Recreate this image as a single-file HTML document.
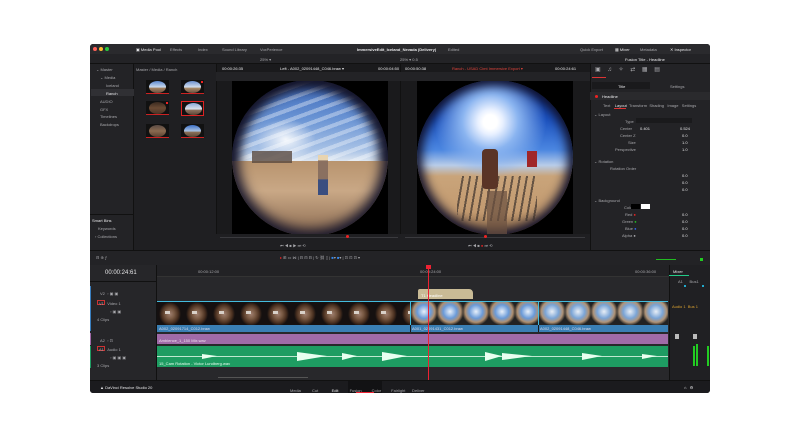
<!DOCTYPE html>
<html><head><meta charset="utf-8"><style>
*{margin:0;padding:0;box-sizing:border-box}
body{width:800px;height:438px;background:#fff;position:relative;overflow:hidden;font-family:"Liberation Sans",sans-serif;color:#b8b8bc;font-size:4px}
.a{position:absolute}
.t{position:absolute;white-space:nowrap;font-size:4px;color:#a8a8ac}
.w{color:#e6e6e8}
.th{position:absolute;width:23px;height:14px;border-bottom:1px solid #c22;background:#111;overflow:hidden}
.th i{position:absolute;left:3px;top:1px;width:17px;height:12px;border-radius:50%}
</style></head><body>
<div class="a" style="left:90px;top:44px;width:620px;height:349px;background:#1c1c1f;border-radius:3px;overflow:hidden">
 <div class="a" style="left:0;top:0;width:620px;height:10px;background:#2a2a2d"></div>
 <div class="a" style="left:3px;top:3px;width:4px;height:4px;border-radius:50%;background:#ff5f57"></div>
 <div class="a" style="left:9px;top:3px;width:4px;height:4px;border-radius:50%;background:#febc2e"></div>
 <div class="a" style="left:15px;top:3px;width:4px;height:4px;border-radius:50%;background:#28c840"></div>
 <span class="t w" style="left:46px;top:3px">▣ Media Pool</span>
 <span class="t" style="left:80px;top:3px">Effects</span>
 <span class="t" style="left:108px;top:3px">Index</span>
 <span class="t" style="left:132px;top:3px">Sound Library</span>
 <span class="t" style="left:170px;top:3px">VoxPerience</span>
 <span class="t w" style="left:267px;top:3px;font-weight:bold">ImmersiveEdit_Iceland_Nevada (Delivery)</span>
 <span class="t" style="left:358px;top:3px">Edited</span>
 <span class="t" style="left:490px;top:3px">Quick Export</span>
 <span class="t w" style="left:525px;top:3px">▦ Mixer</span>
 <span class="t" style="left:550px;top:3px">Metadata</span>
 <span class="t w" style="left:580px;top:3px">✕ Inspector</span>
 <div class="a" style="left:0;top:10px;width:620px;height:10px;background:#232326;border-bottom:1px solid #111"></div>
 <span class="t" style="left:170px;top:13px">25% ▾</span>
 <span class="t" style="left:310px;top:13px">25% ▾ 0.5</span>
 <span class="t w" style="left:535px;top:13px">Fusion Title - Headline</span>
 <div class="a" style="left:0;top:20px;width:44px;height:186px;background:#232326;border-right:1px solid #111"></div>
 <span class="t" style="left:6px;top:23px">⌄ Master</span>
 <span class="t" style="left:10px;top:31px">⌄ Media</span>
 <span class="t" style="left:16px;top:39px">Iceland</span>
 <div class="a" style="left:1px;top:45px;width:43px;height:7px;background:#303034"></div>
 <span class="t w" style="left:16px;top:47px">Ranch</span>
 <span class="t" style="left:10px;top:55px">AUDIO</span>
 <span class="t" style="left:10px;top:63px">GFX</span>
 <span class="t" style="left:10px;top:70px">Timelines</span>
 <span class="t" style="left:10px;top:78px">Backdrops</span>
 <div class="a" style="left:0;top:170px;width:44px;height:1px;background:#111"></div>
 <span class="t w" style="left:2px;top:174px">Smart Bins</span>
 <span class="t" style="left:8px;top:182px">Keywords</span>
 <span class="t" style="left:5px;top:190px">› Collections</span>
 <div class="a" style="left:44px;top:20px;width:82px;height:186px;background:#1f1f22"></div>
 <span class="t" style="left:46px;top:23px">Master / Media / Ranch</span>
 <div class="th" style="left:56px;top:36px"><i style="background:linear-gradient(#5c88d0,#c8d8ec 50%,#a08060 60%,#6a5040)"></i></div>
 <div class="th" style="left:91px;top:36px"><i style="background:linear-gradient(#6a90d0,#d0dcec 50%,#a88a68 60%,#6a5040)"></i><b class="a" style="right:1px;top:1px;width:2px;height:2px;background:#e22"></b></div>
 <div class="th" style="left:56px;top:57px"><i style="background:linear-gradient(#3a2a20,#6a4a34 50%,#4a3426)"></i><b class="a" style="right:1px;top:1px;width:2px;height:2px;background:#e22"></b></div>
 <div class="th" style="left:91px;top:57px;border:1px solid #d22;height:15px"><i style="background:linear-gradient(#8aa8d8,#d8e0ea 50%,#8a7260 60%,#5a4434)"></i></div>
 <div class="th" style="left:56px;top:80px"><i style="background:linear-gradient(#5a4a44,#8a6a50 50%,#5a4030)"></i></div>
 <div class="th" style="left:91px;top:80px"><i style="background:linear-gradient(#3c70c8,#a8c0e0 50%,#8a7058 60%,#5a4434)"></i></div>
 <div class="a" style="left:126px;top:20px;width:184px;height:186px;background:#1a1a1c;border-left:1px solid #111"></div>
 <span class="t w" style="left:132px;top:22px">00:00:26:35</span>
 <span class="t w" style="left:190px;top:22px">Left - A002_02091448_C046.braw ▾</span>
 <span class="t w" style="left:288px;top:22px">00:00:04:50</span>
 <div class="a" style="left:126px;top:28px;width:184px;height:9px;background:#232326"></div>
 <div class="a" style="left:142px;top:37px;width:156px;height:153px;background:#000;overflow:hidden">
  <div class="a" style="left:-2px;top:-1px;width:159px;height:156px;border-radius:50%;background:radial-gradient(ellipse 30px 20px at 35% 38%,rgba(255,255,255,.9),rgba(255,255,255,0)),repeating-linear-gradient(160deg,rgba(255,255,255,0) 0 6px,rgba(255,255,255,.35) 6px 10px),linear-gradient(#3a66b8 0%,#6a94d4 25%,#a8c2e6 45%,#dde6f0 52%,#7a6a5c 56%,#c9a886 62%,#b8946e 80%,#6a5040 100%);box-shadow:inset 0 0 12px 6px #1a1a2e"></div>
  <div class="a" style="left:0;top:80px;width:156px;height:75px;border-radius:0 0 80px 80px;background:linear-gradient(#b8946e,#c9a886 40%,#8a6a50)"></div>
  <div class="a" style="left:20px;top:70px;width:40px;height:12px;background:#5a4a40;opacity:.8"></div>
  <div class="a" style="left:86px;top:74px;width:10px;height:40px;background:linear-gradient(#e8d4b0 0,#e8d4b0 12%,#8a7060 15%,#8a7060 60%,#3a4e80 62%)"></div>
  <div class="a" style="left:0;top:-1px;width:156px;height:156px;border-radius:50%;box-shadow:0 0 0 40px #000,inset 0 0 12px 6px #14142a"></div>
 </div>
 <div class="a" style="left:126px;top:190px;width:184px;height:16px;background:#1f1f22"></div>
 <div class="a" style="left:130px;top:193px;width:178px;height:1px;background:#3a3a3e"></div>
 <div class="a" style="left:256px;top:191px;width:3px;height:3px;background:#e22;border-radius:50%"></div>
 <span class="t" style="left:190px;top:199px">⏮ ◀ ■ ▶ ⏭ ⟲</span>
 <div class="a" style="left:310px;top:20px;width:190px;height:186px;background:#1a1a1c;border-left:1px solid #111"></div>
 <span class="t w" style="left:315px;top:22px">00:00:50:38</span>
 <span class="t" style="left:362px;top:22px;color:#e0443c">Ranch - USAD Cimt Immersive Export ▾</span>
 <span class="t w" style="left:465px;top:22px">00:00:24:61</span>
 <div class="a" style="left:310px;top:28px;width:190px;height:9px;background:#232326"></div>
 <div class="a" style="left:327px;top:37px;width:156px;height:153px;background:#000;overflow:hidden">
  <div class="a" style="left:0;top:-1px;width:156px;height:155px;border-radius:50%;background:radial-gradient(circle at 47% 27%,#fff 0,#fff 5%,#e8f0ff 9%,#8ab4f0 20%,rgba(60,110,210,0) 40%),linear-gradient(#0c2e8a 0%,#1c52c0 25%,#4b86e0 45%,#b8cce8 55%,#c9a47a 62%,#c29a70 85%,#8a6848 100%);box-shadow:inset 0 0 10px 5px #10102a"></div>
  <div class="a" style="left:40px;top:95px;width:80px;height:45px;background:repeating-linear-gradient(100deg,transparent 0 5px,rgba(60,50,45,.7) 5px 7px)"></div>
  <div class="a" style="left:65px;top:68px;width:16px;height:40px;background:#5a3426;border-radius:4px"></div>
  <div class="a" style="left:110px;top:70px;width:10px;height:16px;background:#a02628"></div>
  <div class="a" style="left:70px;top:110px;width:20px;height:45px;background:#6a5040;opacity:.7"></div>
 </div>
 <div class="a" style="left:310px;top:190px;width:190px;height:16px;background:#1f1f22"></div>
 <div class="a" style="left:315px;top:193px;width:180px;height:1px;background:#3a3a3e"></div>
 <div class="a" style="left:394px;top:191px;width:3px;height:3px;background:#e22;border-radius:50%"></div>
 <span class="t" style="left:378px;top:199px">⏮ ◀ ■ <span style="color:#e22">●</span> ⏭ ⟲</span>
 <div class="a" style="left:500px;top:20px;width:120px;height:186px;background:#232326;border-left:1px solid #111"></div>
 <span class="t" style="left:505px;top:22px;font-size:6px">▣&nbsp;&nbsp;&nbsp;&nbsp;♫&nbsp;&nbsp;&nbsp;&nbsp;✧&nbsp;&nbsp;&nbsp;&nbsp;⇄&nbsp;&nbsp;&nbsp;&nbsp;▦&nbsp;&nbsp;&nbsp;&nbsp;▤</span>
 <div class="a" style="left:502px;top:33px;width:14px;height:1px;background:#d33"></div>
 <div class="a" style="left:502px;top:38px;width:58px;height:7px;background:#1a1a1c"></div>
 <span class="t w" style="left:528px;top:40px">Title</span>
 <span class="t" style="left:580px;top:40px">Settings</span>
 <div class="a" style="left:500px;top:48px;width:120px;height:8px;background:#2a2a2d"></div>
 <div class="a" style="left:505px;top:51px;width:3px;height:3px;background:#e22;border-radius:50%"></div>
 <span class="t w" style="left:512px;top:50px">Headline</span>
 <span class="t" style="left:513px;top:59px">Text&nbsp;&nbsp;&nbsp;&nbsp;<span class="w">Layout</span>&nbsp;&nbsp;Transform&nbsp;&nbsp;Shading&nbsp;&nbsp;&nbsp;Image&nbsp;&nbsp;&nbsp;Settings</span>
 <div class="a" style="left:524px;top:64px;width:12px;height:1px;background:#d33"></div>
 <span class="t" style="left:504px;top:68px">⌄ Layout</span>
 <span class="t" style="left:535px;top:75px">Type</span><div class="a" style="left:546px;top:74px;width:56px;height:5px;background:#1a1a1c"></div>
 <span class="t" style="left:530px;top:82px">Center</span><span class="t w" style="left:550px;top:82px">0.401</span><span class="t w" style="left:590px;top:82px">0.524</span>
 <span class="t" style="left:530px;top:89px">Center Z</span><span class="t w" style="left:592px;top:89px">0.0</span>
 <span class="t" style="left:538px;top:96px">Size</span><span class="t w" style="left:592px;top:96px">1.0</span>
 <span class="t" style="left:525px;top:103px">Perspective</span><span class="t w" style="left:592px;top:103px">1.0</span>
 <span class="t" style="left:504px;top:115px">⌄ Rotation</span>
 <span class="t" style="left:520px;top:122px">Rotation Order</span>
 <span class="t w" style="left:592px;top:129px">0.0</span><span class="t w" style="left:592px;top:136px">0.0</span><span class="t w" style="left:592px;top:143px">0.0</span>
 <span class="t" style="left:504px;top:154px">⌄ Background</span>
 <span class="t" style="left:534px;top:161px">Color</span><div class="a" style="left:541px;top:160px;width:9px;height:5px;background:#000"></div><div class="a" style="left:551px;top:160px;width:9px;height:5px;background:#fff"></div>
 <span class="t" style="left:535px;top:168px">Red <span style="color:#e22">●</span></span><span class="t w" style="left:592px;top:168px">0.0</span>
 <span class="t" style="left:532px;top:175px">Green <span style="color:#2b2">●</span></span><span class="t w" style="left:592px;top:175px">0.0</span>
 <span class="t" style="left:535px;top:182px">Blue <span style="color:#36e">●</span></span><span class="t w" style="left:592px;top:182px">0.0</span>
 <span class="t" style="left:532px;top:189px">Alpha ●</span><span class="t w" style="left:592px;top:189px">0.0</span>
 <div class="a" style="left:0;top:206px;width:620px;height:15px;background:#232326;border-top:1px solid #111"></div>
 <span class="t" style="left:6px;top:211px">⊟ ⊕ ⨍</span>
 <span class="t" style="left:190px;top:211px"><span style="color:#e22">▸</span> ⊞ ▭ ⋈ | ⊟ ⊟ ⊟ | ↻ ⛓ ▯ | <span style="color:#38e">■</span>▾ <span style="color:#38e">■</span>▾ | ⊡ ⊡ ⊡ ▾</span>
 <div class="a" style="left:566px;top:215px;width:20px;height:1px;background:#2b2"></div>
 <div class="a" style="left:610px;top:214px;width:3px;height:3px;background:#2c2"></div>
 <div class="a" style="left:0;top:221px;width:67px;height:124px;background:#262629;border-right:1px solid #111"></div>
 <span class="t w" style="left:15px;top:226px;font-size:6px">00:00:24:61</span>
 <div class="a" style="left:0;top:237px;width:67px;height:1px;background:#111"></div>
 <span class="t" style="left:10px;top:247px">V2 &nbsp;▫ ▣ ▣</span>
 <div class="a" style="left:7px;top:256px;width:8px;height:5px;border:1px solid #c33"></div>
 <span class="t" style="left:9px;top:257px">V1 &nbsp;&nbsp;Video 1</span>
 <span class="t" style="left:20px;top:265px">▫ ▣ ▣</span>
 <span class="t" style="left:7px;top:273px">4 Clips</span>
 <span class="t" style="left:10px;top:294px">A2 &nbsp;▫ ⊡</span>
 <div class="a" style="left:7px;top:302px;width:8px;height:5px;border:1px solid #c33"></div>
 <span class="t" style="left:9px;top:303px">A1 &nbsp;&nbsp;Audio 1</span>
 <span class="t" style="left:20px;top:311px">▫ ▣ ▣ ▣</span>
 <span class="t" style="left:7px;top:319px">3 Clips</span>
 <div class="a" style="left:0;top:242px;width:1px;height:45px;background:#3a7fc0"></div>
 <div class="a" style="left:0;top:289px;width:1px;height:12px;background:#a06aa8"></div>
 <div class="a" style="left:0;top:302px;width:1px;height:22px;background:#1e9c62"></div>
 <div class="a" style="left:67px;top:221px;width:512px;height:124px;background:#28282b"></div>
 <div class="a" style="left:67px;top:221px;width:512px;height:12px;background:#222225;border-bottom:1px solid #333"></div>
 <span class="t" style="left:108px;top:225px">00:00:12:00</span>
 <span class="t" style="left:330px;top:225px">00:00:24:00</span>
 <span class="t" style="left:545px;top:225px">00:00:36:00</span>
 <div class="a" style="left:328px;top:245px;width:55px;height:10px;background:#c9bb96;border-radius:2px 4px 0 0"></div>
 <span class="t" style="left:331px;top:249px;color:#fff">T1 Headline</span>
 <div class="a" style="left:67px;top:257px;width:253px;height:24px;background:radial-gradient(ellipse 11px 12px at 13px 12px,#a08070 0,#7a5a44 40%,#4a3020 75%,#151010 100%);background-size:27px 24px;border-top:1px solid #4bd"></div>
 <div class="a" style="left:67px;top:267px;width:253px;height:3px;background:repeating-linear-gradient(90deg,transparent 0 8px,#d8d0c8 8px 13px,transparent 13px 27px)"></div>
 <div class="a" style="left:320px;top:257px;width:128px;height:24px;background:radial-gradient(circle at 50% 40%,#e8f0fa 0,#6a9ad8 35%,#b09070 55%,#222 72%);background-size:26px 24px;border-left:1px solid #4bd;border-top:1px solid #4bd"></div>
 <div class="a" style="left:448px;top:257px;width:130px;height:24px;background:radial-gradient(circle at 50% 40%,#e8eef6 0,#7aa4d6 35%,#b09478 55%,#222 72%);background-size:26px 24px;border-left:1px solid #4bd;border-top:1px solid #4bd"></div>
 <div class="a" style="left:67px;top:281px;width:511px;height:7px;background:#3a7fb4"></div>
 <span class="t" style="left:69px;top:282px;color:#dde">A002_02091714_C012.braw</span>
 <span class="t" style="left:322px;top:282px;color:#dde">A001_02091431_C012.braw</span>
 <span class="t" style="left:450px;top:282px;color:#dde">A002_02091448_C046.braw</span>
 <div class="a" style="left:320px;top:281px;width:1px;height:7px;background:#1a1a1c"></div>
 <div class="a" style="left:448px;top:281px;width:1px;height:7px;background:#1a1a1c"></div>
 <div class="a" style="left:67px;top:290px;width:511px;height:10px;background:#a06ba8"></div>
 <span class="t" style="left:69px;top:294px;color:#f0e0f0">Ambience_1_150 Mix.wav</span>
 <div class="a" style="left:67px;top:302px;width:511px;height:21px;background:#1e9c62"></div>
 <svg class="a" style="left:67px;top:302px" width="511" height="21"><path d="M0 10.5H511" stroke="#bfe8d0" stroke-width="1"/><path d="M45 8 L60 10 L45 13Z M140 6 L170 10 L140 15Z M185 7 L200 10 L185 14Z M225 6 L250 10 L225 15Z M328 6 L345 10 L328 15Z M345 7 L375 10 L345 14Z M425 7 L445 10 L425 14Z M485 8 L500 10 L485 13Z" fill="#e8fff0"/></svg>
 <span class="t" style="left:69px;top:317px;color:#e8fff0">15_Cam Rotation - Victor Lundberg.wav</span>
 <div class="a" style="left:128px;top:333px;width:90px;height:1px;background:#555"></div>
 <div class="a" style="left:338px;top:223px;width:1px;height:122px;background:#e23"></div>
 <div class="a" style="left:336px;top:221px;width:5px;height:4px;background:#e23"></div>
 <div class="a" style="left:579px;top:221px;width:41px;height:124px;background:#202023;border-left:1px solid #111"></div>
 <span class="t w" style="left:583px;top:225px">Mixer</span>
 <div class="a" style="left:579px;top:231px;width:20px;height:1px;background:#2c8"></div>
 <span class="t" style="left:588px;top:235px">A1 &nbsp;&nbsp;&nbsp;&nbsp;&nbsp;Bus1</span>
 <div class="a" style="left:594px;top:241px;width:2px;height:2px;background:#2ac"></div>
 <div class="a" style="left:612px;top:241px;width:2px;height:2px;background:#2ac"></div>
 <span class="t" style="left:582px;top:260px;color:#d9a030">Audio 1 &nbsp;Bus 1</span>
 <div class="a" style="left:585px;top:290px;width:4px;height:5px;background:#bbb"></div>
 <div class="a" style="left:603px;top:290px;width:4px;height:5px;background:#bbb"></div>
 <div class="a" style="left:603px;top:302px;width:2px;height:20px;background:#2c2"></div>
 <div class="a" style="left:606px;top:300px;width:2px;height:22px;background:#2c2"></div>
 <div class="a" style="left:617px;top:302px;width:2px;height:20px;background:#2c2"></div>
 <div class="a" style="left:0;top:336px;width:620px;height:13px;background:#1b1b1e;border-top:1px solid #111"></div>
 <span class="t w" style="left:10px;top:341px">▲ DaVinci Resolve Studio 20</span>
 <div class="a" style="left:258px;top:337px;width:34px;height:12px;background:#121214"></div>
 <div class="a" style="left:266px;top:348px;width:18px;height:1px;background:#e23"></div>
 <span class="t" style="left:200px;top:344px">Media&nbsp;&nbsp;&nbsp;&nbsp;&nbsp;&nbsp;&nbsp;&nbsp;&nbsp;&nbsp;Cut&nbsp;&nbsp;&nbsp;&nbsp;&nbsp;&nbsp;&nbsp;&nbsp;&nbsp;&nbsp;&nbsp;&nbsp;<span class="w">Edit</span>&nbsp;&nbsp;&nbsp;&nbsp;&nbsp;&nbsp;&nbsp;&nbsp;&nbsp;&nbsp;Fusion&nbsp;&nbsp;&nbsp;&nbsp;&nbsp;&nbsp;&nbsp;&nbsp;&nbsp;Color&nbsp;&nbsp;&nbsp;&nbsp;&nbsp;&nbsp;&nbsp;&nbsp;&nbsp;Fairlight&nbsp;&nbsp;&nbsp;&nbsp;&nbsp;&nbsp;Deliver</span>
 <span class="t w" style="left:594px;top:341px">⌂ &nbsp;&nbsp;⚙</span>
</div>
</body></html>
